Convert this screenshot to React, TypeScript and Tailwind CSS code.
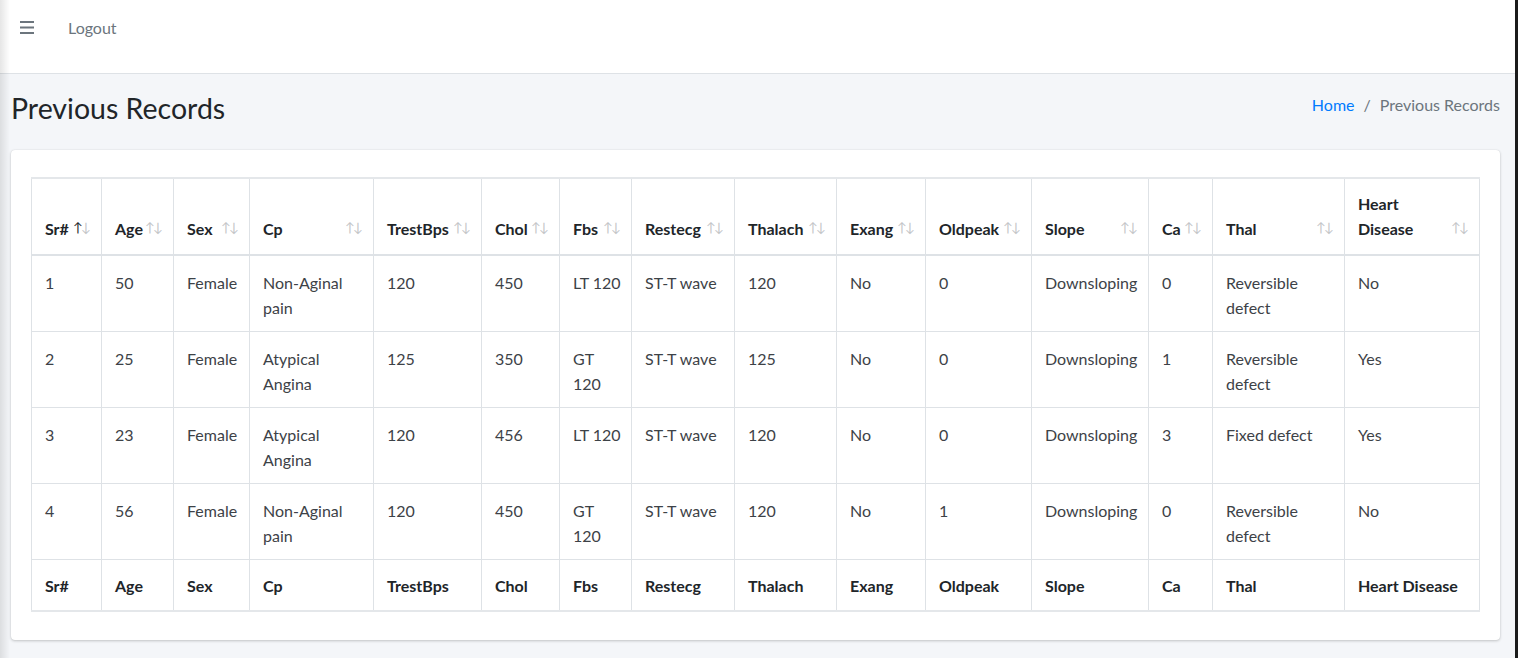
import React from 'react';

type Cell = string | string[];

const COLS: { label: string[]; w: number }[] = [
    { label: ['Sr#'], w: 70 },
    { label: ['Age'], w: 72 },
    { label: ['Sex'], w: 76 },
    { label: ['Cp'], w: 124 },
    { label: ['TrestBps'], w: 108 },
    { label: ['Chol'], w: 78 },
    { label: ['Fbs'], w: 72 },
    { label: ['Restecg'], w: 103 },
    { label: ['Thalach'], w: 102 },
    { label: ['Exang'], w: 89 },
    { label: ['Oldpeak'], w: 106 },
    { label: ['Slope'], w: 117 },
    { label: ['Ca'], w: 64 },
    { label: ['Thal'], w: 132 },
    { label: ['Heart', 'Disease'], w: 135 },
];

const ROWS: Cell[][] = [
    ['1', '50', 'Female', ['Non-Aginal', 'pain'], '120', '450', 'LT 120', 'ST-T wave', '120', 'No', '0', 'Downsloping', '0', ['Reversible', 'defect'], 'No'],
    ['2', '25', 'Female', ['Atypical', 'Angina'], '125', '350', ['GT', '120'], 'ST-T wave', '125', 'No', '0', 'Downsloping', '1', ['Reversible', 'defect'], 'Yes'],
    ['3', '23', 'Female', ['Atypical', 'Angina'], '120', '456', 'LT 120', 'ST-T wave', '120', 'No', '0', 'Downsloping', '3', 'Fixed defect', 'Yes'],
    ['4', '56', 'Female', ['Non-Aginal', 'pain'], '120', '450', ['GT', '120'], 'ST-T wave', '120', 'No', '1', 'Downsloping', '0', ['Reversible', 'defect'], 'No'],
];

function Lines({ v }: { v: Cell }) {
    const parts = Array.isArray(v) ? v : [v];
    return (
        <>
            {parts.map((p, i) => (
                <React.Fragment key={i}>
                    {i > 0 && <br />}
                    {p}
                </React.Fragment>
            ))}
        </>
    );
}

export default function App() {
    return (
        <div className="relative flex min-h-[658px] bg-[#f4f6f9] text-[16px] text-[#212529]" style={{ fontFamily: 'Lato, "Noto Sans", sans-serif' }}>
            {/* sidebar shadow */}
            <div className="pointer-events-none absolute left-0 top-0 h-full w-[10px] bg-gradient-to-r from-black/10 to-transparent" />

            <div className="flex-1 min-w-0">
                {/* Navbar */}
                <nav className="h-[74px] bg-white border-b border-[#dee2e6] flex items-start pt-[16px]">
                    <button className="ml-[20px] mt-[5px] w-[14px]">
                        <svg width="14" height="13" viewBox="0 0 14 13" className="text-[#6c757d]">
                            <rect x="0" y="0" width="14" height="2" fill="currentColor" />
                            <rect x="0" y="5.5" width="14" height="2" fill="currentColor" />
                            <rect x="0" y="11" width="14" height="2" fill="currentColor" />
                        </svg>
                    </button>
                    <a className="ml-[34px] text-[16px] leading-[24px] text-[#6c757d]">Logout</a>
                </nav>

                {/* Content header */}
                <div className="flex items-start justify-between pl-[11px] pr-[15px] pt-[17px] h-[76px]">
                    <h1 className="text-[28.5px] leading-[34px] font-normal text-[#212529]">Previous Records</h1>
                    <ol className="flex items-center text-[16px] leading-[28px]">
                        <li className="text-[#007bff]">Home</li>
                        <li className="px-[9px] text-[#6c757d]">/</li>
                        <li className="text-[#6c757d]">Previous Records</li>
                    </ol>
                </div>

                {/* Card */}
                <div className="ml-[11px] mr-[15px] bg-white rounded-[4px] shadow-[0_0_1px_rgba(0,0,0,0.125),0_1px_3px_rgba(0,0,0,0.2)] px-[20px] pt-[27px] pb-[28px]">
                    <table className="table-fixed w-[1448px] border-collapse border-t-2 border-b-2 border-[#e4e7ea] leading-[25px]">
                        <colgroup>
                            {COLS.map((c, i) => (
                                <col key={i} style={{ width: c.w }} />
                            ))}
                        </colgroup>
                        <thead>
                            <tr>
                                {COLS.map((c, i) => (
                                    <th key={i} className="relative border border-[#dee2e6] border-b-2 border-b-[#dee2e6] align-bottom text-left font-bold text-[#212529] pl-[13px] pr-[28px] pt-3 pb-[13px] whitespace-nowrap">
                                        <Lines v={c.label} />
                                        <span className={`absolute bottom-[14px] right-[18px] text-[13px] font-normal ${i === 0 ? 'text-[#212529]' : 'text-[#c3c5c7]'}`}>↑</span>
                                        <span className="absolute bottom-[14px] right-[10px] text-[13px] font-normal text-[#c3c5c7]">↓</span>
                                    </th>
                                ))}
                            </tr>
                        </thead>
                        <tbody>
                            {ROWS.map((r, ri) => (
                                <tr key={ri}>
                                    {r.map((v, ci) => (
                                        <td key={ci} className="border border-[#dee2e6] align-top pl-[13px] pr-2 pt-[14px] pb-[11px] whitespace-nowrap text-[#3d4247]">
                                            <Lines v={v} />
                                        </td>
                                    ))}
                                </tr>
                            ))}
                        </tbody>
                        <tfoot>
                            <tr>
                                {COLS.map((c, i) => (
                                    <th key={i} className="border border-[#dee2e6] text-left font-bold text-[#212529] pl-[13px] pr-2 pt-[13px] pb-3 whitespace-nowrap">
                                        {c.label.join(' ')}
                                    </th>
                                ))}
                            </tr>
                        </tfoot>
                    </table>
                </div>
            </div>

            {/* right edge strip */}
            <div className="w-[3px] bg-[#1b1b1b]" />
        </div>
    );
}
